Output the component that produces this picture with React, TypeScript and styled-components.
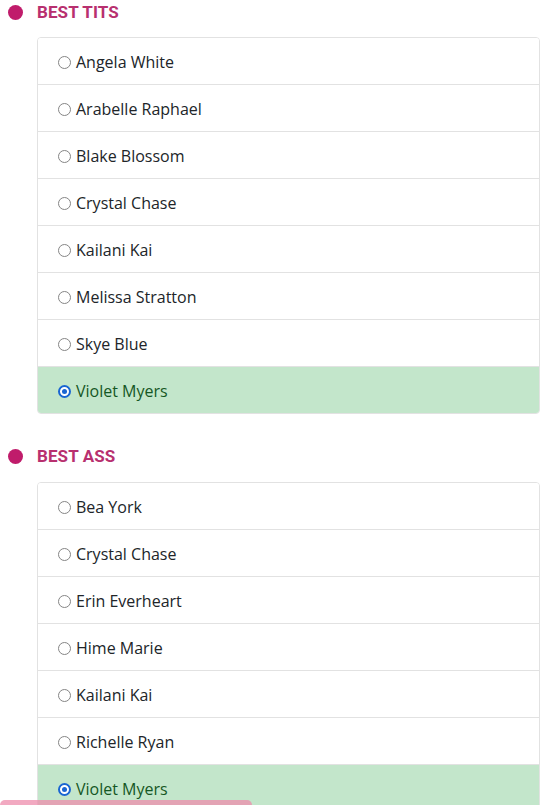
import React from 'react'
import styled, { createGlobalStyle } from 'styled-components'

const GlobalStyle = createGlobalStyle`
  body {
    margin: 0;
    background: #fff;
    font-family: 'Open Sans', 'Liberation Sans', sans-serif;
    overflow: hidden;
  }
`

const categories = [
  {
    title: 'BEST TITS',
    options: ['Angela White', 'Arabelle Raphael', 'Blake Blossom', 'Crystal Chase', 'Kailani Kai', 'Melissa Stratton', 'Skye Blue', 'Violet Myers'],
    selected: 'Violet Myers',
  },
  {
    title: 'BEST ASS',
    options: ['Bea York', 'Crystal Chase', 'Erin Everheart', 'Hime Marie', 'Kailani Kai', 'Richelle Ryan', 'Violet Myers'],
    selected: 'Violet Myers',
  },
]

const Page = styled.div`
  padding: 0 2px 0 0;
`

const Section = styled.section`
  margin-bottom: 30px;
`

const Heading = styled.h3`
  display: flex;
  align-items: center;
  height: 24px;
  margin: 0 0 13px;
  font-family: Roboto, 'Liberation Sans', sans-serif;
  font-weight: 700;
  font-size: 17px;
  color: #b8306f;
  letter-spacing: 0.1px;
  section + section & {
    margin-bottom: 14px;
  }
`

const Bullet = styled.span`
  width: 15px;
  height: 15px;
  border-radius: 50%;
  background: #c01c6b;
  margin: 0 14px 0 8px;
  flex-shrink: 0;
`

const List = styled.div`
  margin-left: 37px;
  border: 1px solid #e2e2e2;
  border-radius: 4px;
  overflow: hidden;
`

const Row = styled.label<{ $active: boolean }>`
  box-sizing: border-box;
  display: flex;
  align-items: center;
  height: 46px;
  padding: 2px 0 0 20px;
  font-size: 16px;
  color: ${p => (p.$active ? '#155724' : '#212529')};
  background: ${p => (p.$active ? '#c3e6cb' : '#fff')};
  & + & {
    border-top: 1px solid #e2e2e2;
    height: 47px;
  }
`

const Radio = styled.span<{ $checked: boolean }>`
  box-sizing: border-box;
  width: 13px;
  height: 13px;
  border-radius: 50%;
  margin-right: 5px;
  background: #fff;
  border: ${p => (p.$checked ? '2px solid #1a66d2' : '1.5px solid #858585')};
  display: flex;
  align-items: center;
  justify-content: center;
  &::after {
    content: '';
    display: ${p => (p.$checked ? 'block' : 'none')};
    width: 5px;
    height: 5px;
    border-radius: 50%;
    background: #1a66d2;
  }
`

const PinkBar = styled.div`
  position: fixed;
  left: 0;
  bottom: 0;
  width: 252px;
  height: 5px;
  border-radius: 8px 8px 0 0;
  background: rgba(238, 140, 172, 0.75);
`

export default function App() {
  return (
    <Page>
      <GlobalStyle />
      {categories.map(cat => (
        <Section key={cat.title}>
          <Heading>
            <Bullet />
            {cat.title}
          </Heading>
          <List>
            {cat.options.map(name => (
              <Row key={name} $active={name === cat.selected}>
                <Radio $checked={name === cat.selected} />
                {name}
              </Row>
            ))}
          </List>
        </Section>
      ))}
      <PinkBar />
    </Page>
  )
}
